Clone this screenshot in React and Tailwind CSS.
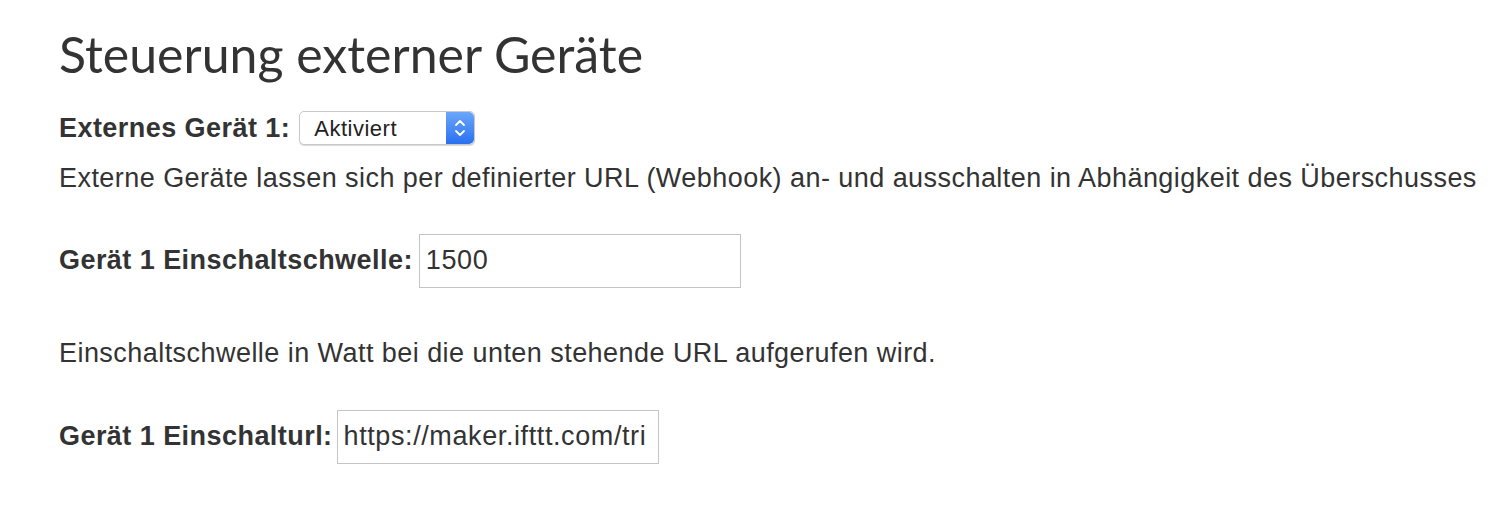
import React from "react";

const SelectBox = ({ value }) => {
  return (
    <div className="flex h-[34px] w-[176px] items-stretch rounded-[5px] border border-[#c8c8c8] bg-white shadow-[0_1px_1px_rgba(0,0,0,0.15)]">
      <div className="flex flex-1 items-center pl-[14px] text-[22px] tracking-[0.5px] text-[#222]">{value}</div>
      <div className="flex w-[28px] items-center justify-center rounded-r-[5px] bg-gradient-to-b from-[#6aa6fa] to-[#2a6ff0]">
        <svg width="12" height="22" viewBox="0 0 12 22" fill="none" stroke="white" strokeWidth="1.8" strokeLinecap="round" strokeLinejoin="round">
          <path d="M2 8 L6 4 L10 8" />
          <path d="M2 14 L6 18 L10 14" />
        </svg>
      </div>
    </div>
  );
};

const TextField = ({ value }) => {
  return (
    <div className="flex h-[54px] w-[322px] items-center overflow-hidden whitespace-nowrap border border-[#c4c4c4] bg-white pl-[6px] text-[27px] tracking-[0.6px] text-[#333]">
      {value}
    </div>
  );
};

const App = () => {
  return (
    <div className="min-h-screen bg-white font-['Liberation_Sans',Arial,sans-serif] text-[#333] tracking-[0.45px]">
      <div className="px-[59px] pt-[24px]">
        <h1 className="font-['Lato','Noto_Sans',sans-serif] text-[50px] leading-[60px] tracking-normal text-[#333]">
          Steuerung externer Geräte
        </h1>

        <div className="mt-[24px] flex items-center gap-[9px]">
          <span className="text-[27px] font-bold">Externes Gerät 1:</span>
          <SelectBox value="Aktiviert" />
        </div>

        <p className="mt-[14px] whitespace-nowrap text-[27px] leading-[30px]">
          Externe Geräte lassen sich per definierter URL (Webhook) an- und ausschalten in Abhängigkeit des Überschusses
        </p>

        <div className="mt-[41px] flex items-center gap-[6px]">
          <span className="text-[27px] font-bold">Gerät 1 Einschaltschwelle:</span>
          <TextField value="1500" />
        </div>

        <p className="mt-[50px] text-[27px] leading-[30px]">
          Einschaltschwelle in Watt bei die unten stehende URL aufgerufen wird.
        </p>

        <div className="mt-[42px] flex items-center gap-[4px]">
          <span className="text-[27px] font-bold">Gerät 1 Einschalturl:</span>
          <TextField value="https://maker.ifttt.com/tri" />
        </div>
      </div>
    </div>
  );
};

export default App;
